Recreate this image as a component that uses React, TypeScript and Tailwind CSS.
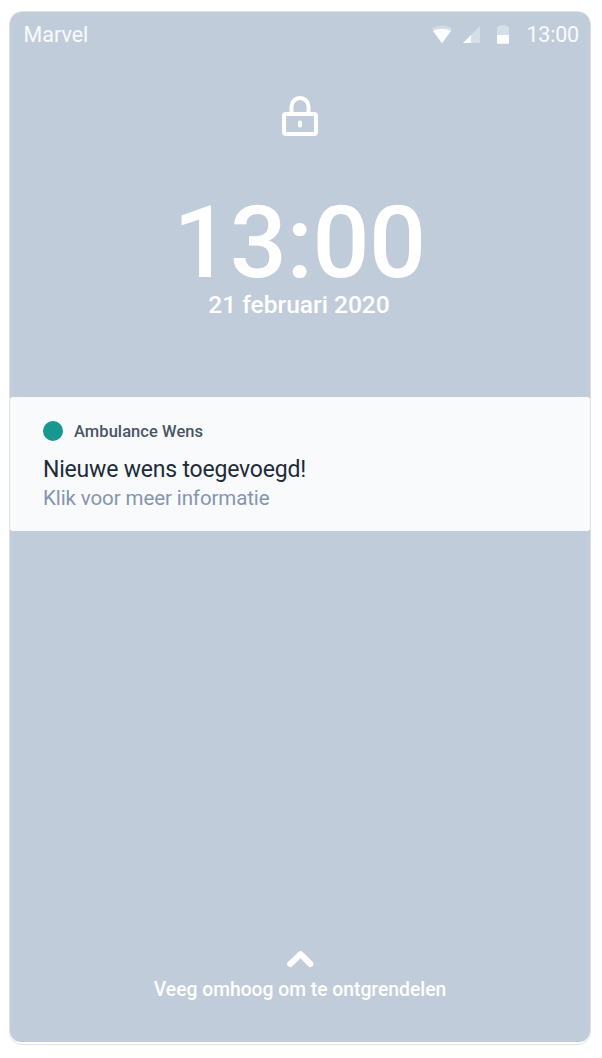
function StatusBar() {
  return (
    <header className="flex h-[46px] items-center pr-[11px] pl-[13.5px] text-[21.5px] leading-none text-white/90">
      <span className="flex-1 pb-px">Marvel</span>
      <svg className="h-[20px] w-[22px]" viewBox="0 0 22 20" fill="white">
        <path d="M.8 3.8C6.8-.6 15.2-.6 21.2 3.8L11 18.3Z" fillOpacity=".3" />
        <path d="M2 5.9C7.2 2.9 14.8 2.9 20 5.9L11 18.3Z" fillOpacity=".9" />
      </svg>
      <svg className="ml-[10px] h-[18px] w-[17px]" viewBox="0 0 17 18" fill="white">
        <path d="M17 0V17H0Z" fillOpacity=".35" />
        <path d="M8 9V17H0Z" fillOpacity=".9" />
      </svg>
      <svg className="ml-[17px] h-[20px] w-[12px]" viewBox="0 0 12 20" fill="white">
        <path d="M0 10V3Q0 1 2 1H3L4 0H8L9 1H10Q12 1 12 3V10Z" fillOpacity=".35" />
        <path d="M0 10H12V18.7H1Q0 18.7 0 17.7Z" fillOpacity=".95" />
      </svg>
      <span className="ml-[17px] pb-px tracking-[-0.2px]">13:00</span>
    </header>
  );
}

function Notification() {
  return (
    <section className="h-[134px] rounded-[3px] bg-[#f8fafc] pt-[24px] pl-[33px]">
      <div className="flex h-[21px] items-center">
        <span className="mb-px size-[20px] rounded-full bg-[#16978f]" />
        <span className="ml-[11px] pt-[2px] text-[16.5px] leading-none font-medium tracking-[0.06px] text-[#4a5565]">Ambulance Wens</span>
      </div>
      <h2 className="mt-[13px] text-[23px] leading-[30px] tracking-[-0.2px] text-[#1f2b3a]">Nieuwe wens toegevoegd!</h2>
      <p className="text-[20.5px] leading-[27px] tracking-[-0.1px] text-[#8696ad]">Klik voor meer informatie</p>
    </section>
  );
}

export default function App() {
  return (
    <div className="h-[1058px] bg-white pt-[11px] pl-[9px] font-['Roboto',sans-serif] whitespace-nowrap">
      <main className="h-[1034px] w-[582px] overflow-hidden rounded-[13px] border border-[#dfe2e5] bg-white">
        <div className="flex h-[1030px] flex-col rounded-b-[11px] bg-[#c1ccda] text-white">
          <StatusBar />
          <div className="flex h-[339px] flex-col items-center pt-[38px]">
            <svg className="h-[41px] w-[38px]" viewBox="0 0 38 41" fill="none" stroke="white" strokeWidth="4">
              <path d="M10.5 18V10.5a8.5 8.5 0 0 1 17 0V18" />
              <rect x="3" y="18" width="32" height="20" rx="2" />
              <path d="M19 26.5v3" strokeLinecap="round" />
            </svg>
            <h1 className="mt-[56px] pr-[1px] text-[100.5px] leading-[100px] font-medium tracking-[-0.5px]">13:00</h1>
            <p className="pr-[2px] text-[24.5px] leading-[24px] font-medium">21 februari 2020</p>
          </div>
          <Notification />
          <footer className="mt-auto flex flex-col items-center pb-[40px]">
            <svg className="h-[18px] w-[28px]" viewBox="0 0 28 18" fill="none" stroke="white" strokeWidth="6" strokeLinecap="round" strokeLinejoin="round">
              <path d="M4.2 13L14.5 3.2L24.5 13" />
            </svg>
            <p className="mt-[9px] text-[19.3px] leading-[24px] font-medium">Veeg omhoog om te ontgrendelen</p>
          </footer>
        </div>
      </main>
    </div>
  );
}
